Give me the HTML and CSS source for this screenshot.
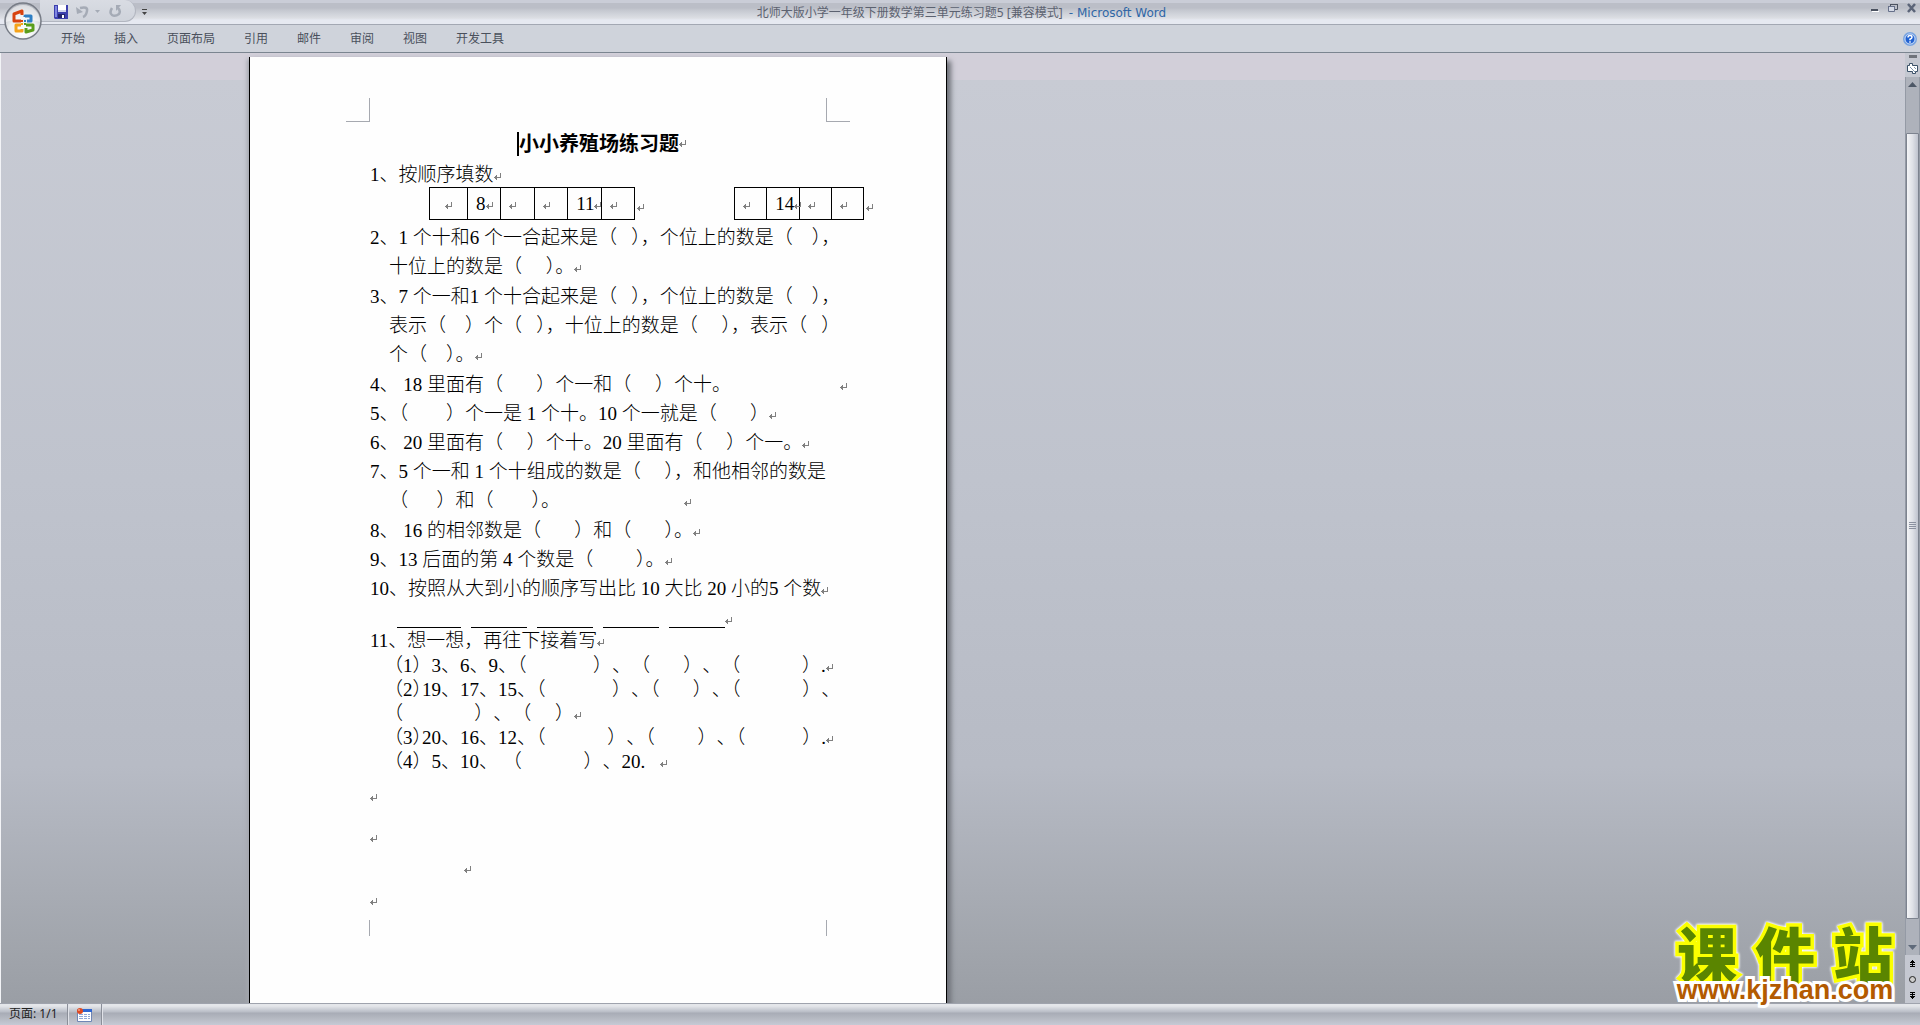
FILE: index.html
```html
<!DOCTYPE html>
<html lang="zh-CN">
<head>
<meta charset="utf-8">
<title>北师大版小学一年级下册数学第三单元练习题5 [兼容模式] - Microsoft Word</title>
<link rel="stylesheet" href="styles.css">
</head>
<body>
<svg class="defs" aria-hidden="true">
  <symbol id="ret" viewBox="0 0 8 8"><path d="M6.500 0v4.500H2M2.500 2v5M1.500 3v3M0 4.500h2" fill="none" stroke="#808080"/></symbol>
</svg>
<header class="chrome">
  <button class="office" aria-label="Office 按钮">
    <svg width="40" height="40" viewBox="0 0 40 40">
      <defs>
        <radialGradient id="orb" cx=".5" cy=".8" r=".8"><stop offset="0" stop-color="#fff"/><stop offset=".5" stop-color="#eceef0"/><stop offset="1" stop-color="#a9adb6"/></radialGradient>
      </defs>
      <circle cx="20" cy="20" r="18" fill="url(#orb)" stroke="#777c86" stroke-width="1.500"/>
      <path d="M3 21a17 17 0 0 1 34 0q-17-6-34 0" fill="#fff" opacity=".5"/>
      <g fill="none" stroke-width="3" stroke-linejoin="round">
        <path d="M18 20h-7v-7l8-3v4" stroke="#d8420e"/>
        <path d="M22 16v-1h6v5h-4" stroke="#2f7fc4" stroke-width="3"/>
        <path d="M18 24h-5v6h6v-2" stroke="#f5a31a"/>
        <path d="M23 24h7v5l-7 2v-4" stroke="#5b9e1c"/>
      </g>
      <path d="M18 19h2v2h-2z" fill="#d8420e"/><path d="M21 19h2v2h-2z" fill="#2f7fc4"/><path d="M18 22h2v2h-2z" fill="#f5a31a"/><path d="M21 22h2v2h-2z" fill="#5b9e1c"/>
    </svg>
  </button>
  <div class="titlebar">
    <div class="quick">
      <button aria-label="保存"><svg width="14" height="14" viewBox="0 0 14 14"><path d="M0 0h14v14H1l-1-1z" fill="#3c3fae"/><path d="M1 1h2v11H1z" fill="#7f86e0"/><path d="M4 0h8v7H4z" fill="#fff"/><path d="M4 5h8v2H4z" fill="#cfd4ee"/><path d="M4 9h7v4H4z" fill="#22246e"/><path d="M8 10h2v3H8z" fill="#fff"/></svg></button>
      <button class="undo" aria-label="撤消"><svg width="14" height="14" viewBox="0 0 14 14"><path d="M4 3Q12 1 11 6T7 12" fill="none" stroke="#a5abb6" stroke-width="2.500"/><path d="M0 2l1 7 6-2z" fill="#a5abb6"/></svg><svg width="5" height="3" viewBox="0 0 5 3"><path d="M0 0h5L2.500 3z" fill="#a5abb6"/></svg></button>
      <button class="redo" aria-label="重复"><svg width="13" height="13" viewBox="0 0 13 13"><path d="M3 3Q0 8 3 10t7-1q2-3-1-6" fill="none" stroke="#a5abb6" stroke-width="2.500"/><path d="M7 0h5L7 6z" fill="#a5abb6"/></svg></button>
    </div>
    <button class="more" aria-label="自定义快速访问工具栏"><svg width="5" height="6" viewBox="0 0 5 6"><path d="M0 0h5v1H0zM0 3h5L2.500 6z" fill="#444"/></svg></button>
    <h1 class="caption">北师大版小学一年级下册数学第三单元练习题5 [兼容模式] <span class="app">- Microsoft Word</span></h1>
    <div class="window">
      <button aria-label="最小化"><svg width="8" height="10" viewBox="0 0 8 10"><path d="M0 6h7v2H0z" fill="#4b5260"/><path d="M1 8h7v1H1z" fill="#fff"/></svg></button>
      <button aria-label="还原"><svg width="10" height="10" viewBox="0 0 10 10"><path d="M2.500 4V1.500h7v5H7" fill="none" stroke="#4b5260"/><path d="M2 1h8v1H2zM0 3h7v1H0z" fill="#4b5260"/><path d="M.5 3.500h6v5h-6z" fill="#d5dae6" stroke="#66708a"/></svg></button>
      <button aria-label="关闭"><svg width="10" height="10" viewBox="0 0 10 10"><path d="M1 1l7 8M8 1L1 9" stroke="#5b6478" stroke-width="2.500"/></svg></button>
    </div>
  </div>
  <nav class="ribbon">
    <a href="#">开始</a><a href="#">插入</a><a href="#">页面布局</a><a href="#">引用</a><a href="#">邮件</a><a href="#">审阅</a><a href="#">视图</a><a href="#">开发工具</a>
    <button class="help" aria-label="帮助"><svg width="14" height="14" viewBox="0 0 14 14"><circle cx="7" cy="7" r="6" fill="#2161d1" stroke="#7aa4e0" stroke-width="2"/><circle cx="7" cy="7" r="5" fill="none" stroke="#e9f1ff" stroke-width=".8"/><path d="M5 5.500q0-2 2-2t2 1.700Q9 6.300 7 7.200v1M7 9.300v1.500" fill="none" stroke="#fff" stroke-width="1.500"/></svg></button>
  </nav>
</header>

<main class="workspace">
  <div class="desk">
    <article class="paper">
      <div class="crops top"><i></i><i></i></div>
      <div class="text">
        <h2><span class="caret"></span>小小养殖场练习题<svg class="ret"><use href="#ret"/></svg></h2>
        <p class="lead">1、按顺序填数<svg class="ret"><use href="#ret"/></svg></p>
        <div class="grids">
          <table class="first"><tr><td><svg class="ret"><use href="#ret"/></svg></td><td>8<svg class="ret"><use href="#ret"/></svg></td><td><svg class="ret"><use href="#ret"/></svg></td><td><svg class="ret"><use href="#ret"/></svg></td><td>11<svg class="ret"><use href="#ret"/></svg></td><td><svg class="ret"><use href="#ret"/></svg></td></tr></table>
          <svg class="ret after"><use href="#ret"/></svg>
          <table class="second"><tr><td><svg class="ret"><use href="#ret"/></svg></td><td>14<svg class="ret"><use href="#ret"/></svg></td><td><svg class="ret"><use href="#ret"/></svg></td><td><svg class="ret"><use href="#ret"/></svg></td></tr></table>
          <svg class="ret after"><use href="#ret"/></svg>
        </div>
        <p class="long">2、1 个十和6 个一合起来是（   <b>）</b>，个位上的数是（    <b>）</b>，
<span class="in"></span>十位上的数是（     <b>）</b>。<svg class="ret"><use href="#ret"/></svg></p>
        <p class="long">3、7 个一和1 个十合起来是（   <b>）</b>，个位上的数是（    <b>）</b>，
<span class="in"></span>表示（    ）个（   <b>）</b>，十位上的数是（     <b>）</b>，表示（   ）
<span class="in"></span>个（    <b>）</b>。<svg class="ret"><use href="#ret"/></svg></p>
        <p>4、 18 里面有（       ）个一和（     ）个十。                       <svg class="ret"><use href="#ret"/></svg></p>
        <p>5<b>、</b>（        ）个一是 1 个十。10 个一就是（       ）<svg class="ret"><use href="#ret"/></svg></p>
        <p>6、 20 里面有（     ）个十。20 里面有（     ）个一。<svg class="ret"><use href="#ret"/></svg></p>
        <p class="long">7、5 个一和 1 个十组成的数是（     <b>）</b>，和他相邻的数是
<span class="in"></span>（      ）和（        <b>）</b>。                          <svg class="ret"><use href="#ret"/></svg></p>
        <p>8、 16 的相邻数是（       ）和（       <b>）</b>。<svg class="ret"><use href="#ret"/></svg></p>
        <p>9、13 后面的第 4 个数是（         <b>）</b>。<svg class="ret"><use href="#ret"/></svg></p>
        <p>10、按照从大到小的顺序写出比 10 大比 20 小的5 个数<svg class="ret"><use href="#ret"/></svg></p>
        <div class="blanks"><i class="wide"></i><i></i><i></i><i></i><i></i><svg class="ret"><use href="#ret"/></svg></div>
        <p class="eleven">11、想一想，再往下接着写<svg class="ret"><use href="#ret"/></svg></p>
        <p class="series"><span class="in"></span>（1）3、6、9<b>、</b>（              ）、（       ）、（             ）.<svg class="ret"><use href="#ret"/></svg>
<span class="in"></span>（2<b>）</b>19、17、15<b>、</b>（              ）<b>、</b>（       ）<b>、</b>（             ）、
<span class="in"></span>（               ）、（     ）<svg class="ret"><use href="#ret"/></svg>
<span class="in"></span>（3<b>）</b>20、16、12<b>、</b>（             ）<b>、</b>（         ）<b>、</b>（            ）.<svg class="ret"><use href="#ret"/></svg>
<span class="in"></span>（4）5、10、 （             ）、20.   <svg class="ret"><use href="#ret"/></svg></p>
        <p class="empty e1"><svg class="ret"><use href="#ret"/></svg></p>
        <p class="empty e2"><svg class="ret"><use href="#ret"/></svg></p>
        <p class="empty e3"><svg class="ret"><use href="#ret"/></svg></p>
        <p class="empty e4"><svg class="ret"><use href="#ret"/></svg></p>
      </div>
      <div class="crops bottom"><i></i><i></i></div>
    </article>
  </div>
  <aside class="scroll">
    <span class="split"></span>
    <button class="ruler" aria-label="标尺"><svg width="13" height="14" viewBox="0 0 13 14"><path d="M1.500 3.500h2v-2h3v2h5v6h-2v2h-3v-2h-5z" fill="#fff" stroke="#3b5168"/><path d="M4 5l5 5M8 5l2 2" stroke="#8296ad"/></svg></button>
    <div class="track">
      <button aria-label="向上滚动"><svg width="9" height="5" viewBox="0 0 9 5"><path d="M0 5h9L4.500 0z" fill="#4d5766"/></svg></button>
      <div class="rail"><div class="thumb"><svg width="7" height="8" viewBox="0 0 7 8"><path d="M0 .5h7M0 2.500h7M0 4.500h7M0 6.500h7" stroke="#8b91a0"/></svg></div></div>
      <button aria-label="向下滚动"><svg width="9" height="5" viewBox="0 0 9 5"><path d="M0 0h9L4.500 5z" fill="#5f6a7a"/></svg></button>
    </div>
    <div class="browse">
      <button aria-label="前一页"><svg width="7" height="7" viewBox="0 0 7 7"><path d="M3 0h1v1h1v1h1v1H4v1h2v1H4v1h2v1H1V6h2V5H1V4h2V3H1V2h1V1h1z"/></svg></button>
      <button aria-label="选择浏览对象"><svg width="7" height="7" viewBox="0 0 7 7"><circle cx="3.500" cy="3.500" r="3" fill="#ccc" stroke="#222"/></svg></button>
      <button aria-label="下一页"><svg width="7" height="7" viewBox="0 0 7 7"><path d="M3 7h1V6h1V5h1V4H4V3h2V2H4V1h2V0H1v1h2v1H1v1h2v1H1v1h1v1h1z"/></svg></button>
    </div>
  </aside>
  <div class="watermark">
    <div class="brand"><span>课</span><span>件</span><span>站</span></div>
    <div class="site">www.kjzhan.com</div>
  </div>
</main>

<footer class="status">
  <span class="pages">页面: 1/1</span>
  <button class="macro" aria-label="录制宏"><svg width="15" height="14" viewBox="0 0 15 14"><path d="M.5 1.500h14v12H.5z" fill="#fff" stroke="#6f86b5"/><path d="M4 1h11v3H4z" fill="#2f66d0"/><path d="M2 6h4v1H2zM7 6h3v1H7zM11 6h2v1h-2zM2 8h4v1H2zM7 8h3v1H7zM11 8h2v1h-2zM2 10h4v1H2zM7 10h3v1H7zM11 10h2v1h-2z" fill="#8fa9d8"/><circle cx="3" cy="3" r="3" fill="#df4a22"/><circle cx="2" cy="2" r="1" fill="#f6a083"/></svg></button>
</footer>
</body>
</html>
```

FILE: styles.css
```css
* { box-sizing: border-box; }
body {
  margin: 0;
  height: 100vh;
  display: flex;
  flex-direction: column;
  overflow: hidden;
  background: #c8cbd4;
  font: 12px/16px "Noto Sans", "Noto Sans CJK SC", sans-serif;
  color: #3f4450;
}
button { border: 0; padding: 0; background: none; display: flex; align-items: center; justify-content: center; }
svg { display: block; flex: none; }
.defs { display: none; }

/* title bar and ribbon */
.chrome { position: relative; flex: none; }
.office { position: absolute; left: 3px; top: 1px; z-index: 2; }
.titlebar {
  height: 25px;
  display: flex;
  align-items: stretch;
  padding-left: 40px;
  border-bottom: 1px solid #a3a8b3;
  background: linear-gradient(#cacdd7 0 3px, #bbbec7 3px 8px, #c4c7cf 10px, #d0d3da 14px, #dcdee3 18px, #e6e9f1 20px);
}
.quick {
  width: 96px;
  height: 22px;
  display: flex;
  align-items: center;
  padding: 2px 0 0 14px;
  border: 1px solid #b2b6c0;
  border-width: 0 1px 1px 0;
  border-radius: 0 12px 12px 0;
  background: linear-gradient(#d9dce3, #cfd3db);
}
.undo { margin-left: 8px; gap: 5px; }
.redo { margin-left: 9px; }
.more { width: 16px; }
.caption {
  flex: 1;
  margin: 0;
  padding: 5px 100px 0 0;
  font-size: 12px;
  font-weight: 400;
  text-align: center;
  white-space: nowrap;
  color: #5c6270;
}
.app { padding-left: 3px; font-family: "DejaVu Sans", sans-serif; color: #2f66a6; }
.window { display: flex; align-items: flex-start; gap: 9px; padding: 3px 3px 0 0; }
.ribbon {
  height: 28px;
  display: flex;
  align-items: center;
  gap: 29px;
  padding: 0 3px 0 61px;
  background: #cfd3db;
  border-bottom: 1px solid #7b8590;
  box-shadow: 0 1px #dfe6ee;
}
.ribbon a { color: #4a505c; text-decoration: none; }
.help { margin-left: auto; }

/* document area */
.workspace {
  position: relative;
  flex: 1;
  min-height: 0;
  display: flex;
  border-left: 1px solid #f2f3f6;
  background: linear-gradient(#d2cfd9 0 27px, #c8cbd4 27px, #bfc3cd 45%, #b7bbc5 75%, #a0a4ab 95%, #9a9ea5);
}
.desk { flex: 1; min-width: 0; overflow: hidden; padding: 4px 0 0 248px; }
.paper {
  width: 698px;
  min-height: 100%;
  padding: 41px 96px 66px;
  background: #fefefe;
  border: 1px solid #000;
  border-width: 0 1px;
  box-shadow: 4px 4px 5px #6e7178, -2px 2px 4px #a6a9b1;
}
.crops { display: flex; justify-content: space-between; }
.crops i { width: 24px; height: 24px; border: 0 solid #a6a9b0; }
.top i { border-bottom-width: 1px; }
.top i:first-child, .bottom i:first-child { border-right-width: 1px; }
.top i:last-child, .bottom i:last-child { border-left-width: 1px; }
.bottom i { height: 16px; }
.text {
  padding: 0 24px;
  font: 19px/29px "Liberation Serif", "Noto Sans CJK SC", serif;
  font-weight: 300;
  color: #000;
  text-spacing-trim: space-all;
}
.text p { margin: 0; white-space: pre; }
.text b { font-weight: inherit; font-feature-settings: "halt"; }
.ret { display: inline-block; width: 8px; height: 8px; shape-rendering: crispEdges; }
.text h2 {
  display: flex;
  justify-content: center;
  align-items: center;
  margin: 10px 0 7px;
  font-size: 20px;
  line-height: 24px;
}
.text h2 .ret { margin-right: -8px; }
.caret { width: 2px; height: 24px; background: #000; }
.text .lead { line-height: 24px; }
.text .long { margin-bottom: 1px; }
.in { display: inline-block; width: 19px; }
.series .in { width: 14px; }
.grids { display: flex; align-items: center; width: max-content; margin-bottom: 3px; padding-left: 59px; }
.grids table { border-collapse: collapse; table-layout: fixed; line-height: 31px; }
.grids td { padding: 0 0 0 8px; border: 1px solid #000; white-space: nowrap; }
.first { width: 206px; }
.grids .first td:first-child { width: 38px; padding-left: 15px; }
.second { width: 130px; margin-left: 89px; }
.grids table .ret { margin-right: -8px; }
.after { margin: 8px 0 0 2px; }
.blanks { display: flex; align-items: flex-end; gap: 10px; height: 25px; padding-left: 27px; }
.blanks i { width: 56px; border-bottom: 1px solid #000; }
.blanks .wide { width: 64px; }
.blanks .ret { margin: 0 0 3px -10px; }
.text .eleven { line-height: 26px; }
.text .series { line-height: 24px; }
.text .e1 { line-height: 44px; }
.text .e2 { line-height: 38px; }
.text .e3 { line-height: 24px; padding-left: 94px; }
.text .e4 { line-height: 40px; }
.bottom { padding: 0; }

/* vertical scroll bar */
.scroll { width: 15px; flex: none; display: flex; flex-direction: column; align-items: center; background: #c5c8d1; }
.split { width: 8px; height: 3px; margin: 2px 0 3px; background: #6f737b; }
.ruler { height: 16px; }
.track { flex: 1; align-self: stretch; display: flex; flex-direction: column; background: #aeb2bb; border: 1px solid #949aa5; border-width: 0 1px; }
.track button { height: 15px; }
.rail { flex: 1; padding: 41px 0 21px; }
.thumb { height: 100%; display: flex; align-items: center; justify-content: center; background: linear-gradient(90deg, #f4f5f7, #dfe1e7 50%, #bfc3ce); border: 1px solid #7d838f; border-radius: 1px; }
.browse { height: 48px; display: flex; flex-direction: column; justify-content: space-around; }

/* site mark over the corner of the workspace */
.watermark { position: absolute; right: 18px; bottom: 0; width: 234px; }
.brand, .site { paint-order: stroke fill; stroke-linejoin: round; }
.brand {
  display: flex;
  justify-content: space-around;
  font: 900 60px/52px "Noto Sans CJK SC", sans-serif;
  color: #5a8500;
  -webkit-text-stroke: 7px #fbff00;
  filter: drop-shadow(0 0 1px #fff) drop-shadow(0 0 1px #fff);
}
.site {
  position: relative;
  font: 700 27px/25px "Liberation Sans", sans-serif;
  text-align: center;
  color: #b35a00;
  -webkit-text-stroke: 6px #fff;
}

/* status bar */
.status {
  flex: none;
  height: 22px;
  display: flex;
  border-top: 1px solid #9fa3ad;
  background: linear-gradient(#e4e6ea 0 2px, #c6cad2 6px, #b9bdc6 8px, #a8acb6 9px, #b4b8c1 14px, #c6cad5 21px);
  color: #222;
}
.pages { padding: 2px 9px 0; width: 68px; border-right: 1px solid #8b8f99; white-space: nowrap; }
.macro { width: 34px; border-right: 1px solid #8b8f99; box-shadow: 1px 0 #e0e2e8, inset 1px 0 #e0e2e8; }
```
